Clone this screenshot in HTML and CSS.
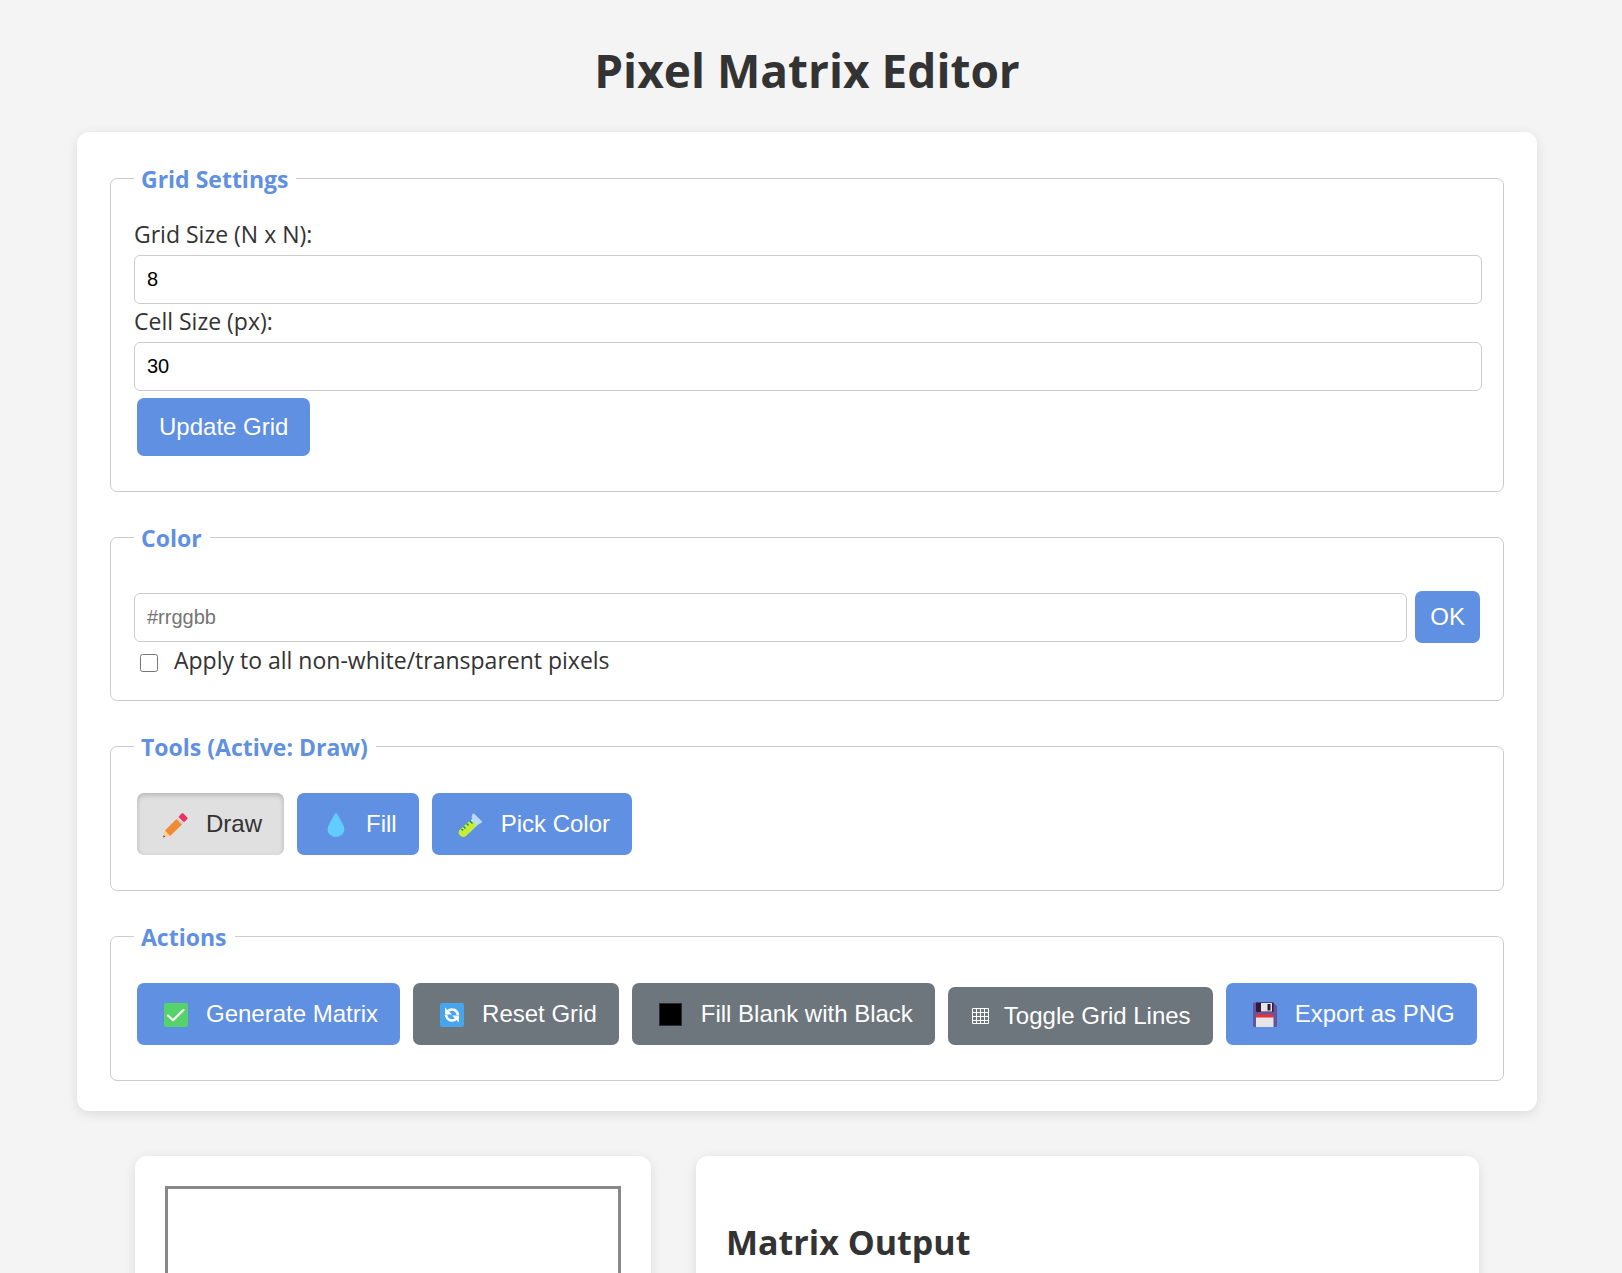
FILE: index.html
```html
<!DOCTYPE html>
<html lang="en">
<head>
<meta charset="utf-8">
<meta name="viewport" content="width=device-width, initial-scale=1">
<title>Pixel Matrix Editor</title>
<link rel="stylesheet" href="styles.css">
</head>
<body>
<h1>Pixel Matrix Editor</h1>

<main class="controls card">
  <fieldset class="group">
    <legend>Grid Settings</legend>
    <label class="field-label" for="grid-size">Grid Size (N x N):</label>
    <input class="field" type="text" inputmode="numeric" id="grid-size" value="8">
    <label class="field-label" for="cell-size">Cell Size (px):</label>
    <input class="field" type="text" inputmode="numeric" id="cell-size" value="30">
    <div class="submit-row"><button class="btn" type="button">Update Grid</button></div>
  </fieldset>

  <fieldset class="group group-color">
    <legend>Color</legend>
    <div class="color-row">
      <input class="field" type="text" placeholder="#rrggbb" aria-label="Hex color">
      <button class="btn btn-ok" type="button">OK</button>
    </div>
    <div class="check-row">
      <input type="checkbox" id="apply-all">
      <label class="field-label" for="apply-all">Apply to all non-white/transparent pixels</label>
    </div>
  </fieldset>

  <fieldset class="group group-buttons">
    <legend>Tools (Active: Draw)</legend>
    <div class="btn-row">
      <button class="btn btn-icon active" type="button">
        <svg class="icon" viewBox="0 0 33 26" aria-hidden="true">
          <path d="M4 25.500 6 18.500 11 23.500z" fill="#ffcf86"/>
          <path d="M4 25.500 4.700 23.200 6.300 24.800z" fill="#433b6b"/>
          <path d="M6 18.500 17.500 7 23 12.500 11.200 24z" fill="#f28a34"/>
          <path d="M17.500 7 19.500 5 25 10.500 23 12.500z" fill="#d3d3d3"/>
          <path d="M19.500 5 22.500 1.500Q23.500.800 24.500 1.600L28 5.200Q29 6.300 28 7.300L25 10.300z" fill="#e9315f"/>
        </svg>Draw</button>
      <button class="btn btn-icon" type="button">
        <svg class="icon" viewBox="0 0 33 26" aria-hidden="true">
          <path d="M17 1C18 1 18.300 2 18.700 2.800L24 12.500C28 20 22.500 25 17 25S6 20 10 12.500L15.300 2.800C15.700 2 16 1 17 1z" fill="#62cbff"/>
        </svg>Fill</button>
      <button class="btn btn-icon" type="button">
        <svg class="icon" viewBox="0 0 33 26" aria-hidden="true">
          <path d="M10 15 20 5 26 11 15 21z" fill="#b9d9ff"/>
          <path d="M18.500 2 20 1.500 28 9.500 27.500 11 24 12 17.500 5.500z" fill="#b9d9ff"/>
          <path d="M16 8.500 23.500 12.500 12 24Q8.500 26 6 23.500T5.500 18z" fill="#c5ee35"/>
          <path d="M15.500 8.500 18.500 11.500M12.500 11.500 14.500 13.500M9.500 14.500 11.500 16.500M7.500 17 9 18.500" fill="none" stroke="#208c79" stroke-width="1.500"/>
        </svg>Pick Color</button>
    </div>
  </fieldset>

  <fieldset class="group group-buttons">
    <legend>Actions</legend>
    <div class="btn-row">
      <button class="btn btn-icon" type="button">
        <svg class="icon" viewBox="0 0 33 26" aria-hidden="true">
          <rect x="5" y="1" width="24" height="24" rx="2" fill="#55d36a"/>
          <path d="M9 13.500 14 18.200 24.500 8" fill="none" stroke="#fff" stroke-width="2.200" stroke-linecap="round" stroke-linejoin="round"/>
        </svg>Generate Matrix</button>
      <button class="btn btn-icon btn-grey" type="button">
        <svg class="icon" viewBox="0 0 33 26" aria-hidden="true">
          <rect x="5" y="1" width="24" height="24" rx="2" fill="#46a5ed"/>
          <path d="M12.500 9.500Q15.500 6.500 19.500 8 22.500 9.500 23 13M21.500 16.500Q18.500 19.500 14.500 18 11.500 16.500 11 13" fill="none" stroke="#fff" stroke-width="2.600"/>
          <path d="M10 5.500v7h7zM24 20.500v-7h-7z" fill="#fff"/>
        </svg>Reset Grid</button>
      <button class="btn btn-icon btn-grey" type="button">
        <svg class="icon" viewBox="0 0 33 26" aria-hidden="true">
          <rect x="5.500" y="1.500" width="22" height="22" fill="#000" stroke="#2b2d30"/>
        </svg>Fill Blank with Black</button>
      <button class="btn btn-glyph btn-grey" type="button">
        <svg class="glyph" viewBox="0 0 20 17" aria-hidden="true">
          <path d="M2.500.500h16v15h-16zM6.500.500v15M10.500.500v15M14.500.500v15M2.500 4.500h16M2.500 8.500h16M2.500 12.500h16" fill="none" stroke="#fff"/>
        </svg>Toggle Grid Lines</button>
      <button class="btn btn-icon" type="button">
        <svg class="icon" viewBox="0 0 33 26" aria-hidden="true">
          <path d="M6.500.500H25L29 4V23.500Q29 25 27.500 25H6.500Q5 25 5 23.500V2Q5 .500 6.500.500z" fill="#64549a"/>
          <path d="M8 .500H25.500V9Q25.500 10 24.500 10H9Q8 10 8 9z" fill="#32183f"/>
          <path d="M13 1h11v8.500H13z" fill="#e6e6e6"/>
          <path d="M19.500 2h3v6.500h-3z" fill="#32183f"/>
          <path d="M8 15h17.500v10H8z" fill="#e6e6e6"/>
          <path d="M9 12.500h15.500l1 1V15.500H8V13.500z" fill="#f02f34"/>
        </svg>Export as PNG</button>
    </div>
  </fieldset>
</main>

<div class="workspace">
  <section class="card canvas-card" aria-label="Pixel grid">
    <div class="pixel-grid"></div>
  </section>
  <section class="card output-card">
    <h2>Matrix Output</h2>
  </section>
</div>
</body>
</html>
```
FILE: styles.css
```css
* {
  box-sizing: border-box;
}

html {
  overflow: hidden;
}

body {
  margin: 0;
  padding: 36px 85px 0 77px;
  background: #f4f4f4;
  color: #333;
  font-family: "Segoe UI", "Open Sans", sans-serif;
  font-size: 23px;
  line-height: 34px;
}

h1 {
  margin: 0 0 28px;
  font-size: 46px;
  line-height: 68px;
  text-align: center;
}

h2 {
  margin: 0;
  font-size: 34px;
  line-height: 56px;
}

.card {
  background: #fff;
  border-radius: 12px;
  box-shadow: 0 3px 12px rgba(0, 0, 0, 0.1);
}

.controls {
  display: flex;
  flex-direction: column;
  gap: 29px;
  padding: 30px 33px;
}

.group {
  min-width: 0;
  margin: 0;
  padding: 23px 21px 35px 23px;
  border: 1px solid #ccc;
  border-radius: 7px;
}

.group-color {
  padding-top: 38px;
  padding-bottom: 19px;
}

.group-buttons {
  padding-top: 31px;
}

legend {
  padding: 3px 8px 0 7px;
  color: #6090e2;
  font-weight: bold;
  line-height: 29px;
}

.field-label {
  display: block;
  padding-bottom: 4px;
}

.field {
  display: block;
  width: 100%;
  height: 49px;
  padding: 0 12px;
  border: 1px solid #ccc;
  border-radius: 6px;
  background: #fff;
  color: #000;
  font-family: "Liberation Sans", Arial, sans-serif;
  font-size: 20px;
}

.field::placeholder {
  color: #757575;
}

.btn {
  flex: none;
  padding: 15px 22px;
  border: 0;
  border-radius: 7px;
  background: #6090e2;
  color: #fff;
  font-family: "Liberation Sans", Arial, sans-serif;
  font-size: 24px;
  line-height: 28px;
}

.submit-row {
  display: flex;
  padding: 7px 3px 0;
}

.color-row {
  display: flex;
  align-items: center;
  gap: 8px;
  padding-right: 2px;
}

.color-row .field {
  flex: 1;
  min-width: 0;
}

.btn-ok {
  padding: 12px 15px;
}

.check-row {
  display: flex;
  align-items: center;
  gap: 16px;
  padding-left: 6px;
}

.check-row input {
  width: 18px;
  height: 18px;
  margin: 2px 0 0;
}

.btn-row {
  display: flex;
  flex-wrap: wrap;
  align-items: flex-end;
  gap: 13px;
  padding-left: 3px;
}

.btn-icon,
.btn-glyph {
  display: flex;
  align-items: center;
  gap: 14px;
}

.btn-icon {
  height: 62px;
}

.btn-grey {
  background: #6d757d;
}

.active {
  background: #e0e0e0;
  color: #333;
  box-shadow: inset 0 2px 5px rgba(0, 0, 0, 0.2);
}

.icon {
  width: 33px;
  height: 26px;
  margin-top: 2px;
}

.glyph {
  width: 20px;
  height: 17px;
}

.workspace {
  display: flex;
  gap: 45px;
  margin-top: 45px;
  padding: 0 58px;
}

.canvas-card {
  flex: none;
  padding: 30px;
}

.pixel-grid {
  width: 456px;
  height: 456px;
  border: 3px solid #888;
}

.output-card {
  flex: 1;
  padding: 58px 30px;
}
```
